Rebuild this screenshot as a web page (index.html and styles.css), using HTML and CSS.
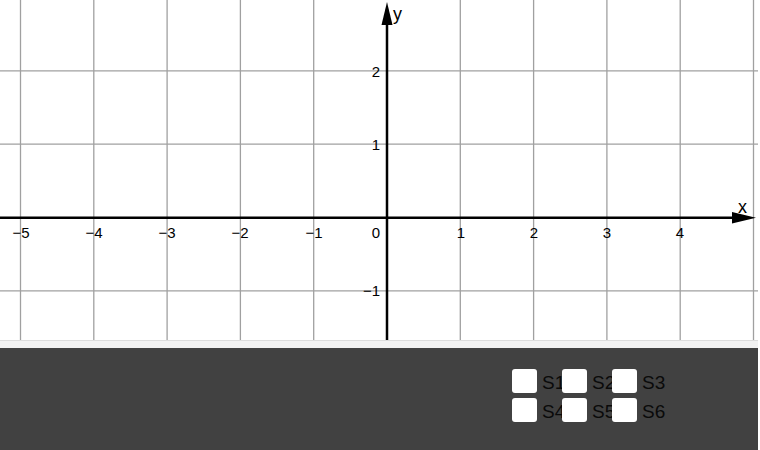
FILE: index.html
```html
<!DOCTYPE html>
<html>
<head>
<meta charset="utf-8">
<link rel="stylesheet" href="styles.css">
</head>
<body>
<div class="app">
  <div class="graph">
    <svg class="plot" width="758" height="340" viewBox="0 0 758 340">
      <g class="grid">
        <line x1="20.5" y1="0" x2="20.5" y2="340"/>
        <line x1="93.8" y1="0" x2="93.8" y2="340"/>
        <line x1="167.1" y1="0" x2="167.1" y2="340"/>
        <line x1="240.4" y1="0" x2="240.4" y2="340"/>
        <line x1="313.7" y1="0" x2="313.7" y2="340"/>
        <line x1="460.3" y1="0" x2="460.3" y2="340"/>
        <line x1="533.6" y1="0" x2="533.6" y2="340"/>
        <line x1="606.9" y1="0" x2="606.9" y2="340"/>
        <line x1="680.2" y1="0" x2="680.2" y2="340"/>
        <line x1="753.5" y1="0" x2="753.5" y2="340"/>
        <line x1="0" y1="70.9" x2="758" y2="70.9"/>
        <line x1="0" y1="144.2" x2="758" y2="144.2"/>
        <line x1="0" y1="290.8" x2="758" y2="290.8"/>
      </g>
      <g class="axes">
        <line x1="0" y1="217.8" x2="740" y2="217.8"/>
        <line x1="387" y1="20" x2="387" y2="340"/>
      </g>
      <g class="arrows">
        <polygon points="381.5,25 387,2 392.5,25"/>
        <polygon points="732,212 756,217.8 732,223.5"/>
      </g>
      <g class="labels">
        <text x="21" y="237.5" text-anchor="middle">−5</text>
        <text x="94" y="237.5" text-anchor="middle">−4</text>
        <text x="167" y="237.5" text-anchor="middle">−3</text>
        <text x="240" y="237.5" text-anchor="middle">−2</text>
        <text x="314" y="237.5" text-anchor="middle">−1</text>
        <text x="380" y="237.5" text-anchor="end">0</text>
        <text x="461" y="237.5" text-anchor="middle">1</text>
        <text x="534" y="237.5" text-anchor="middle">2</text>
        <text x="607" y="237.5" text-anchor="middle">3</text>
        <text x="680" y="237.5" text-anchor="middle">4</text>
        <text x="380" y="76.5" text-anchor="end">2</text>
        <text x="380" y="149.5" text-anchor="end">1</text>
        <text x="380" y="296" text-anchor="end">−1</text>
      </g>
      <text class="axis-name" x="393" y="20">y</text>
      <text class="axis-name" x="738" y="213">x</text>
    </svg>
  </div>
  <div class="band"></div>
  <div class="bar">
    <div class="checks">
      <label class="check"><span class="box"></span><span class="name">S1</span></label>
      <label class="check"><span class="box"></span><span class="name">S2</span></label>
      <label class="check"><span class="box"></span><span class="name">S3</span></label>
      <label class="check"><span class="box"></span><span class="name">S4</span></label>
      <label class="check"><span class="box"></span><span class="name">S5</span></label>
      <label class="check"><span class="box"></span><span class="name">S6</span></label>
    </div>
  </div>
</div>
</body>
</html>
```

FILE: styles.css
```css
html, body {
  margin: 0;
  padding: 0;
  background: #ffffff;
}

.app {
  width: 758px;
  height: 450px;
  display: flex;
  flex-direction: column;
  font-family: "Liberation Sans", Arial, sans-serif;
}

.graph {
  height: 340px;
  background: #ffffff;
}

.plot {
  display: block;
}

.grid line {
  stroke: #a0a0a0;
  stroke-width: 1.3;
}

.axes line {
  stroke: #000000;
  stroke-width: 2.5;
}

.arrows polygon {
  fill: #000000;
}

.labels text {
  font-family: "Liberation Sans", Arial, sans-serif;
  font-size: 15px;
  fill: #000000;
}

.axis-name {
  font-family: "Liberation Sans", Arial, sans-serif;
  font-size: 18px;
  fill: #000000;
}

.band {
  height: 7px;
  background: #f2f2f2;
  border-top: 1px solid #dcdcdc;
}

.bar {
  flex: 1;
  background: #414141;
  padding: 21px 0 0 512px;
}

.checks {
  display: grid;
  grid-template-columns: 50px 50px 50px;
  grid-auto-rows: 29px;
}

.check {
  display: flex;
  align-items: center;
  height: 24px;
  white-space: nowrap;
}

.box {
  flex: none;
  width: 25px;
  height: 24px;
  background: #ffffff;
  border-radius: 3px;
  position: relative;
  z-index: 1;
}

.name {
  margin-left: 5px;
  padding-top: 3px;
  font-size: 19px;
  color: #0a0a0a;
  position: relative;
  z-index: 0;
}
```
